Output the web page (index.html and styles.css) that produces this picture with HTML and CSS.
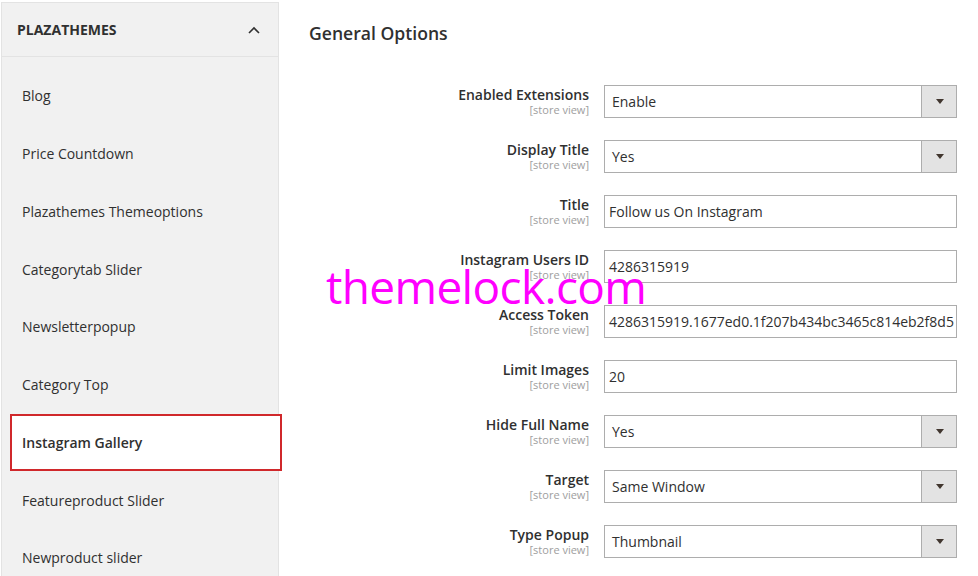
FILE: index.html
```html
<!DOCTYPE html>
<html lang="en">
<head>
<meta charset="utf-8">
<title>General Options</title>
<link rel="stylesheet" href="styles.css">
</head>
<body>
<div class="page">
  <aside class="sidebar">
    <div class="side-head">
      <span class="side-title">PLAZATHEMES</span>
      <svg class="chev" width="12" height="8" viewBox="0 0 12 8"><path d="M1 7 L6 2 L11 7" fill="none" stroke="#303030" stroke-width="1.6"/></svg>
    </div>
    <ul class="side-list">
      <li class="side-item">Blog</li>
      <li class="side-item">Price Countdown</li>
      <li class="side-item">Plazathemes Themeoptions</li>
      <li class="side-item">Categorytab Slider</li>
      <li class="side-item">Newsletterpopup</li>
      <li class="side-item">Category Top</li>
      <li class="side-item active">Instagram Gallery</li>
      <li class="side-item">Featureproduct Slider</li>
      <li class="side-item">Newproduct slider</li>
    </ul>
  </aside>
  <main class="main">
    <h1 class="title">General Options</h1>
    <div class="form">
      <div class="label"><span class="lbl">Enabled Extensions</span><span class="scope">[store view]</span></div>
      <div class="select"><span class="val">Enable</span><span class="btn"><i class="arrow"></i></span></div>

      <div class="label"><span class="lbl">Display Title</span><span class="scope">[store view]</span></div>
      <div class="select"><span class="val">Yes</span><span class="btn"><i class="arrow"></i></span></div>

      <div class="label"><span class="lbl">Title</span><span class="scope">[store view]</span></div>
      <div class="input">Follow us On Instagram</div>

      <div class="label"><span class="lbl">Instagram Users ID</span><span class="scope">[store view]</span></div>
      <div class="input">4286315919</div>

      <div class="label"><span class="lbl">Access Token</span><span class="scope">[store view]</span></div>
      <div class="input">4286315919.1677ed0.1f207b434bc3465c814eb2f8d5</div>

      <div class="label"><span class="lbl">Limit Images</span><span class="scope">[store view]</span></div>
      <div class="input">20</div>

      <div class="label"><span class="lbl">Hide Full Name</span><span class="scope">[store view]</span></div>
      <div class="select"><span class="val">Yes</span><span class="btn"><i class="arrow"></i></span></div>

      <div class="label"><span class="lbl">Target</span><span class="scope">[store view]</span></div>
      <div class="select"><span class="val">Same Window</span><span class="btn"><i class="arrow"></i></span></div>

      <div class="label"><span class="lbl">Type Popup</span><span class="scope">[store view]</span></div>
      <div class="select"><span class="val">Thumbnail</span><span class="btn"><i class="arrow"></i></span></div>
    </div>
  </main>
  <div class="watermark">themelock.com</div>
</div>
</body>
</html>
```
FILE: styles.css
```css
* { box-sizing: border-box; }
html, body { margin: 0; padding: 0; background: #fff; }
body {
  font-family: "Open Sans", "Noto Sans", sans-serif;
  color: #303030;
  width: 978px;
  height: 576px;
  overflow: hidden;
}
.page {
  position: relative;
  display: flex;
  height: 576px;
}
.sidebar {
  width: 278px;
  margin: 2px 0 0 1px;
  background: #f1f1f1;
  border: 1px solid #e3e3e3;
  border-bottom: none;
  flex: none;
}
.side-head {
  height: 54px;
  border-bottom: 1px solid #e3e3e3;
  display: flex;
  align-items: center;
  justify-content: space-between;
  padding: 0 18px 0 15px;
}
.side-title {
  font-weight: 700;
  font-size: 14px;
  color: #303030;
}
.chev { display: block; }
.side-list {
  list-style: none;
  margin: 0;
  padding: 10px 0 0 0;
}
.side-item {
  height: 57.75px;
  display: flex;
  align-items: center;
  padding-left: 20px;
  font-size: 14px;
  color: #303030;
}
.side-item.active {
  background: #fff;
  border: 2px solid #d0282b;
  margin: 0 -4px 0 8px;
  padding-left: 10px;
  font-weight: 600;
  position: relative;
}
.main {
  flex: 1;
  padding: 0 21px 0 30px;
}
.title {
  margin: 23px 0 42px 0;
  font-size: 17.6px;
  font-weight: 600;
  line-height: 20px;
  color: #303030;
}
.form {
  display: grid;
  grid-template-columns: 1fr 353px;
  column-gap: 15px;
  row-gap: 22px;
}
.label {
  display: flex;
  flex-direction: column;
  align-items: flex-end;
  text-align: right;
}
.lbl {
  font-size: 14px;
  font-weight: 600;
  line-height: 19px;
  color: #303030;
}
.scope {
  font-size: 11px;
  line-height: 12px;
  color: #9e9e9e;
}
.input, .select {
  height: 33px;
  border: 1px solid #adadad;
  font-size: 14px;
  color: #303030;
  display: flex;
  align-items: center;
  background: #fff;
  white-space: nowrap;
  overflow: hidden;
}
.input { padding-left: 4px; }
.select { padding-left: 7px; }
.val { flex: 1; }
.btn {
  width: 35px;
  align-self: stretch;
  background: #e3e3e3;
  border-left: 1px solid #adadad;
  display: flex;
  align-items: center;
  justify-content: center;
}
.arrow {
  display: block;
  width: 0;
  height: 0;
  border-left: 4.5px solid transparent;
  border-right: 4.5px solid transparent;
  border-top: 5px solid #41362f;
  margin-left: 1px;
}
.watermark {
  position: absolute;
  left: 326px;
  top: 256px;
  font-family: "Open Sans", sans-serif;
  font-size: 46px;
  line-height: 60px;
  letter-spacing: -0.65px;
  color: #ff00ff;
  white-space: nowrap;
}
```
